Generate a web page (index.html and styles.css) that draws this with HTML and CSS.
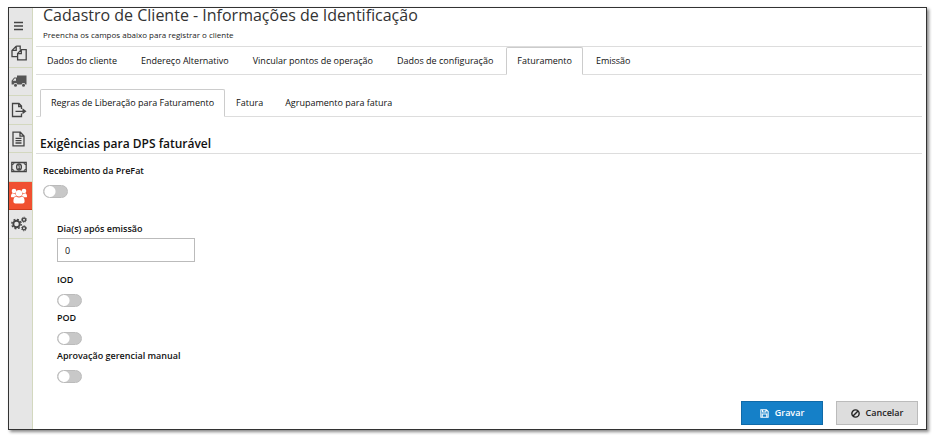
FILE: index.html
```html
<!DOCTYPE html>
<html lang="pt-BR">
<head>
    <meta charset="UTF-8">
    <meta name="viewport" content="width=device-width, initial-scale=1.0">
    <title>Cadastro de Cliente</title>
    <link rel="stylesheet" href="styles.css">
</head>
<body>

    <div class="window">
        <aside class="sidebar">
            <button type="button" class="menu-toggle" aria-label="Menu">
                <svg class="icon" viewBox="0 0 16 16"><path d="M4 4.5h9M4 8h9M4 11.5h9" stroke-width="1.5"/></svg>
            </button>
            <nav class="side-nav">
                <a href="#" aria-label="Documentos">
                    <svg class="icon" viewBox="0 0 16 16"><path d="M5.2 1.2h4v3.3M5.2 1.2 1 5.4v6.3h5.5M5.2 1.2v4.2H1M10.3 4.7h4.9v10.1H6.6V8.4zM10.3 4.7v3.9H6.6"/></svg>
                </a>
                <a href="#" aria-label="Transporte">
                    <svg class="icon solid" viewBox="0 0 16 16"><path d="M6 2.5h9.5v9h-1.1a2 2 0 0 0-3.8 0H6.4a2 2 0 0 0-3.8 0H.6V7.8l2.6-3.3H6zM3.6 5.5 1.8 7.8H5V5.5z" fill-rule="evenodd"/><circle cx="4.5" cy="12.3" r="1.5"/><circle cx="12.5" cy="12.3" r="1.5"/></svg>
                </a>
                <a href="#" aria-label="Exportar">
                    <svg class="icon" viewBox="0 0 16 16"><path d="M10.5 7V4L8 1.5H1.5v13h9v-3M7.7 1.7v2.8h2.7M4.5 9.3h8"/><path d="m11.5 6.3 4 3-4 3z" fill="#444" stroke="none"/></svg>
                </a>
                <a href="#" aria-label="Relatórios">
                    <svg class="icon" viewBox="0 0 16 16"><path d="M2 1.2h7.3L13 5v9.8H2zM9 1.4v3.8h3.8M4.5 7.3h6M4.5 9.6h6M4.5 12h6"/></svg>
                </a>
                <a href="#" aria-label="Financeiro">
                    <svg class="icon" viewBox="0 0 16 16"><path d="M.8 3.5h14.4v9H.8z"/><path d="M.8 5.8a2.3 2.3 0 0 0 2.3-2.3M12.9 3.5a2.3 2.3 0 0 0 2.3 2.3M.8 10.2a2.3 2.3 0 0 1 2.3 2.3M12.9 12.5a2.3 2.3 0 0 1 2.3-2.3" stroke-width="1"/><ellipse cx="8" cy="8" rx="2.4" ry="3"/><path d="M7.2 6.9 8.2 6.3v3.2M7.2 9.6h2" stroke-width="1"/></svg>
                </a>
                <a href="#" class="active" aria-label="Clientes">
                    <svg class="icon solid" viewBox="0 0 16 16"><circle cx="3" cy="3" r="2.3"/><circle cx="13" cy="3" r="2.3"/><path d="M0 8.7C0 6.5.7 5.2 1.8 5.2c.8.6 1.5.5 2.5.2.1 1 .4 1.9 1 2.7-1 0-1.7.3-2.3 1.2H1.2Q0 9.3 0 8.7zM16 8.7c0-2.2-.7-3.5-1.8-3.5-.8.6-1.5.5-2.5.2-.1 1-.4 1.9-1 2.7 1 0 1.7.3 2.3 1.2h1.8q1.2 0 1.2-.6z"/><circle cx="8" cy="5.3" r="3.2"/><path d="M2.4 13.5c0-3 .8-5 2.8-5 1.7 1.3 3.9 1.3 5.6 0 2 0 2.8 2 2.8 5q0 2-2 2H4.4q-2 0-2-2z"/></svg>
                </a>
                <a href="#" aria-label="Configurações">
                    <svg class="icon" viewBox="0 0 16 16"><circle cx="5.5" cy="8" r="3.2" stroke-width="1.9"/><circle cx="5.5" cy="8" r="4.7" stroke-width="1.4" stroke-dasharray="1.9 1.79"/><circle cx="13" cy="3.7" r="1.6"/><circle cx="13" cy="3.7" r="2.5" stroke-width="1" stroke-dasharray="1 .963"/><circle cx="13" cy="12.3" r="1.6"/><circle cx="13" cy="12.3" r="2.5" stroke-width="1" stroke-dasharray="1 .963"/></svg>
                </a>
            </nav>
        </aside>

        <main class="content">
            <header class="page-header">
                <h1>Cadastro de Cliente - Informações de Identificação</h1>
                <p>Preencha os campos abaixo para registrar o cliente</p>
            </header>

            <nav class="tabs main-tabs">
                <a href="#">Dados do cliente</a>
                <a href="#">Endereço Alternativo</a>
                <a href="#">Vincular pontos de operação</a>
                <a href="#">Dados de configuração</a>
                <a href="#" class="selected">Faturamento</a>
                <a href="#">Emissão</a>
            </nav>

            <nav class="tabs sub-tabs">
                <a href="#" class="selected">Regras de Liberação para Faturamento</a>
                <a href="#">Fatura</a>
                <a href="#">Agrupamento para fatura</a>
            </nav>

            <form class="rules">
                <h2>Exigências para DPS faturável</h2>

                <div class="field">
                    <label for="prefat">Recebimento da PreFat</label>
                    <input type="checkbox" class="switch" id="prefat">
                </div>

                <div class="sub-fields">
                    <div class="field days">
                        <label for="dias">Dia(s) após emissão</label>
                        <input type="text" class="text-input" id="dias" value="0">
                    </div>
                    <div class="field">
                        <label for="iod">IOD</label>
                        <input type="checkbox" class="switch" id="iod">
                    </div>
                    <div class="field">
                        <label for="pod">POD</label>
                        <input type="checkbox" class="switch" id="pod">
                    </div>
                    <div class="field">
                        <label for="aprovacao">Aprovação gerencial manual</label>
                        <input type="checkbox" class="switch" id="aprovacao">
                    </div>
                </div>

                <div class="actions">
                    <button type="submit" class="btn save">
                        <svg viewBox="0 0 16 16" fill="none" stroke="currentColor" stroke-width="1.8"><path d="M1.5 1.5h10l3 3v10h-13zM4.5 1.5v4h6v-4M4 14.5V9h8v5.5"/></svg>
                        Gravar
                    </button>
                    <button type="button" class="btn cancel">
                        <svg viewBox="0 0 16 16" fill="none" stroke="currentColor" stroke-width="2.5"><circle cx="8" cy="8" r="6.5"/><path d="m3.5 12.5 9-9"/></svg>
                        Cancelar
                    </button>
                </div>
            </form>
        </main>
    </div>

</body>
</html>
```

FILE: styles.css
```css
* {
    box-sizing: border-box;
}

body {
    margin: 0;
    padding: 7px 5px 5px 8px;
    min-height: 100vh;
    display: flex;
    background-color: white;
    color: #111;
    font-family: "Open Sans", "Noto Sans", sans-serif;
    font-size: 9px;
    line-height: 14px;
}

a {
    color: inherit;
    text-decoration: none;
}

.window {
    flex: 1;
    display: flex;
    border: 1px solid #333;
    box-shadow: 2px 2px 3px #888;
}

/* Sidebar */
.sidebar {
    width: 24px;
    background-color: #e6e6e6;
    border-right: 1px solid #d3d8bf;
}

.menu-toggle {
    display: flex;
    align-items: center;
    width: 100%;
    height: 31px;
    padding: 6px 1px 0;
    border: 0;
    border-bottom: 1px solid #d3d8bf;
    background: none;
}

.side-nav {
    display: flex;
    flex-direction: column;
    height: 200px;
}

.side-nav a {
    flex: 1;
    display: flex;
    align-items: center;
    padding-left: 2px;
    border-bottom: 1px solid #d3d8bf;
}

.side-nav a.active {
    background-color: #f05030;
    border-color: #d03a1c;
}

.icon {
    width: 16px;
    height: 16px;
    fill: none;
    stroke: #444;
    stroke-width: 1.3;
}

.icon.solid {
    fill: #555;
    stroke: none;
}

.active .icon.solid {
    fill: white;
}

/* Content */
.content {
    flex: 1;
    display: flex;
    flex-direction: column;
    padding: 0 4px 4px 3px;
}

.page-header {
    padding-left: 7px;
    height: 38px;
}

h1 {
    margin: 0;
    font-size: 16px;
    font-weight: 400;
    line-height: 14px;
    color: #333;
}

.page-header p {
    margin: 6px 0 0;
    font-size: 8px;
    color: #222;
}

.tabs {
    display: flex;
    border-bottom: 1px solid #ddd;
}

.tabs a {
    padding: 6px 10px;
    margin-bottom: -1px;
    border: 1px solid transparent;
}

.tabs a.selected {
    border-color: #ccc;
    border-bottom-color: white;
    background-color: white;
    border-radius: 2px 2px 0 0;
}

.main-tabs {
    gap: 2px;
    border-top: 1px solid #ddd;
}

.sub-tabs {
    margin-top: 14px;
    padding-left: 4px;
}

.rules {
    flex: 1;
    display: flex;
    flex-direction: column;
}

h2 {
    margin: 17px 0 10px;
    padding-left: 4px;
    font-size: 12px;
    font-weight: 600;
    line-height: 19px;
    border-bottom: 1px solid #ddd;
}

.field {
    display: flex;
    flex-direction: column;
    align-items: flex-start;
    gap: 7px;
    padding-left: 7px;
    margin-bottom: 4px;
}

.field label {
    font-weight: 600;
}

.switch {
    appearance: none;
    width: 25px;
    height: 13px;
    margin: 0;
    border: 1px solid #bbb;
    border-radius: 7px;
    background: radial-gradient(circle at 6px 50%, white 5px, #c8c8c8 6px);
}

.switch:checked {
    background: radial-gradient(circle at 17px 50%, white 5px, #1580c8 6px);
}

.sub-fields {
    margin-top: 20px;
    padding-left: 14px;
}

.days {
    gap: 2px;
    margin-bottom: 11px;
}

.text-input {
    width: 138px;
    height: 24px;
    padding: 0 7px;
    border: 1px solid #bbb;
    font: inherit;
    color: inherit;
}

/* Buttons */
.actions {
    display: flex;
    justify-content: flex-end;
    gap: 13px;
    margin-top: auto;
    padding-right: 4px;
}

.btn {
    display: flex;
    align-items: center;
    justify-content: center;
    gap: 6px;
    width: 82px;
    height: 24px;
    padding: 0;
    font: inherit;
    font-weight: 600;
}

.btn svg {
    width: 9px;
    height: 9px;
}

.save {
    background-color: #1580c8;
    border: 1px solid #106aa8;
    color: white;
}

.cancel {
    background-color: #ddd;
    border: 1px solid #bbb;
    color: #222;
}
```
